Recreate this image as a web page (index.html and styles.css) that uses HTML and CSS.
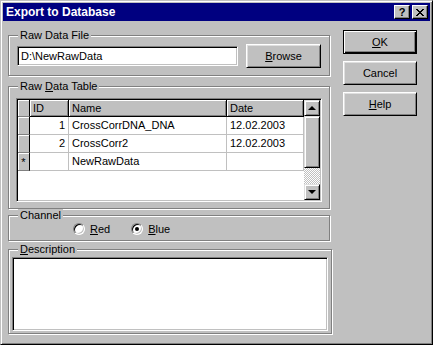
FILE: index.html
```html
<!DOCTYPE html>
<html lang="en">
    <head>
        <meta charset="utf-8" />
        <title>Export to Database</title>
        <link rel="stylesheet" href="styles.css">
    </head>
    <body>
        <div class="window">
            <div class="titlebar">
                <span class="title">Export to Database</span>
                <div class="caption-btns">
                    <span class="cap-btn help">?</span>
                    <span class="cap-btn close">
                        <svg width="8" height="7" viewBox="0 0 8 7" shape-rendering="crispEdges">
                            <path d="M0 0h2v1h1v1h2v-1h1v-1h2v1h-1v1h-1v1h-1v1h1v1h1v1h1v1h-2v-1h-1v-1h-2v1h-1v1h-2v-1h1v-1h1v-1h1v-1h-1v-1h-1v-1h-1z" fill="#000"/>
                        </svg>
                    </span>
                </div>
            </div>
            <div class="client">
                <div class="left">
                    <fieldset class="group group-file">
                        <legend>Raw Data File</legend>
                        <div class="file-row">
                            <div class="field">D:\NewRawData</div>
                            <button class="btn browse"><u>B</u>rowse</button>
                        </div>
                    </fieldset>

                    <fieldset class="group group-table">
                        <legend>Raw <u>D</u>ata Table</legend>
                        <div class="grid">
                            <div class="sheet">
                                <div class="row head">
                                    <div class="cell sel"></div>
                                    <div class="cell">ID</div>
                                    <div class="cell">Name</div>
                                    <div class="cell">Date</div>
                                </div>
                                <div class="row">
                                    <div class="cell sel"></div>
                                    <div class="cell num">1</div>
                                    <div class="cell">CrossCorrDNA_DNA</div>
                                    <div class="cell">12.02.2003</div>
                                </div>
                                <div class="row">
                                    <div class="cell sel"></div>
                                    <div class="cell num">2</div>
                                    <div class="cell">CrossCorr2</div>
                                    <div class="cell">12.02.2003</div>
                                </div>
                                <div class="row">
                                    <div class="cell sel star">*</div>
                                    <div class="cell num"></div>
                                    <div class="cell">NewRawData</div>
                                    <div class="cell"></div>
                                </div>
                            </div>
                            <div class="scrollbar">
                                <div class="sb-btn"><span class="arrow up"></span></div>
                                <div class="sb-thumb"></div>
                                <div class="sb-track"></div>
                                <div class="sb-btn"><span class="arrow down"></span></div>
                            </div>
                        </div>
                    </fieldset>

                    <fieldset class="group group-channel">
                        <legend>Channel</legend>
                        <div class="radios">
                            <label class="radio-item"><span class="radio"></span><span><u>R</u>ed</span></label>
                            <label class="radio-item"><span class="radio checked"></span><span><u>B</u>lue</span></label>
                        </div>
                    </fieldset>

                    <fieldset class="group group-desc">
                        <legend><u>D</u>escription</legend>
                        <div class="memo"></div>
                    </fieldset>
                </div>

                <div class="actions">
                    <button class="btn default"><u>O</u>K</button>
                    <button class="btn">Cancel</button>
                    <button class="btn"><u>H</u>elp</button>
                </div>
            </div>
        </div>
    </body>
</html>
```

FILE: styles.css
```css
:root {
    --face: #c0c0c0;
    --shadow: #808080;
    --light: #dfdfdf;
    --title: #000080;
}

* {
    margin: 0;
    padding: 0;
    box-sizing: border-box;
}

body {
    background: var(--face);
    font-family: "Liberation Sans", Arial, sans-serif;
    font-size: 11px;
    color: #000;
}

u {
    text-underline-offset: 1px;
}

.window {
    width: 433px;
    height: 345px;
    background: var(--face);
    border: 1px solid;
    border-color: var(--face) #000 #000 var(--face);
    box-shadow: inset 1px 1px #fff, inset -1px -1px var(--shadow);
    padding: 2px;
    display: flex;
    flex-direction: column;
}

.titlebar {
    height: 18px;
    background: var(--title);
    display: flex;
    align-items: center;
    justify-content: space-between;
    padding: 0 2px 0 3px;
}

.title {
    color: #fff;
    font-weight: bold;
    font-size: 12px;
    line-height: 18px;
}

.caption-btns {
    display: flex;
    gap: 2px;
}

.cap-btn {
    width: 16px;
    height: 14px;
    background: var(--face);
    border: 1px solid;
    border-color: #fff #000 #000 #fff;
    box-shadow: inset -1px -1px var(--shadow);
    display: flex;
    align-items: center;
    justify-content: center;
    font-weight: bold;
    font-size: 11px;
    line-height: 12px;
}

.client {
    flex: 1;
    display: flex;
    padding: 8px 0 0 5px;
    gap: 11px;
}

.left {
    width: 324px;
    display: flex;
    flex-direction: column;
}

/* all groups: no side padding, so the legend sits 12px in */
.group {
    width: 322px;
    border: 1px solid var(--shadow);
    box-shadow: inset 1px 1px #fff, 1px 1px #fff;
    min-width: 0;
    padding: 0;
}

.group legend {
    margin-left: 9px;
    padding: 0 2px;
    line-height: 13px;
    background: var(--face);
}

/* raw data file */
.group-file {
    padding-top: 2px;
    padding-bottom: 7px;
}

.file-row {
    display: flex;
    align-items: center;
    gap: 8px;
    height: 24px;
    margin-left: 8px;
}

.field {
    width: 221px;
    height: 20px;
    background: #fff;
    border: 1px solid;
    border-color: var(--shadow) #fff #fff var(--shadow);
    box-shadow: inset 1px 1px #000, inset -1px -1px var(--face);
    padding: 0 3px;
    line-height: 18px;
}

.btn {
    width: 75px;
    height: 24px;
    background: var(--face);
    font-family: inherit;
    font-size: 11px;
    color: #000;
    border: 1px solid;
    border-color: #fff #000 #000 #fff;
    box-shadow: inset 1px 1px var(--light), inset -1px -1px var(--shadow);
}

/* raw data table */
.group-table {
    margin-top: 4px;
    padding-top: 5px;
    padding-bottom: 6px;
}

.grid {
    width: 306px;
    height: 104px;
    margin-left: 7px;
    display: flex;
    background: #fff;
    border: 1px solid;
    border-color: var(--shadow) #fff #fff var(--shadow);
    box-shadow: inset 1px 1px #000, inset -1px -1px var(--face);
    padding: 1px;
}

.sheet {
    flex: 1;
}

.row {
    display: grid;
    grid-template-columns: 12px 39px 158px 77px;
    height: 18px;
}

.cell {
    border-right: 1px solid var(--face);
    border-bottom: 1px solid var(--face);
    padding: 0 3px;
    line-height: 17px;
    white-space: nowrap;
    overflow: hidden;
}

.head {
    height: 17px;
}

.head .cell {
    background: var(--face);
    border-right-color: #000;
    border-bottom-color: #000;
    box-shadow: inset 1px 1px #fff, inset -1px -1px var(--shadow);
    line-height: 16px;
}

.cell.num {
    text-align: right;
}

.cell.sel {
    background: var(--face);
    border-right-color: #000;
    border-bottom-color: var(--shadow);
    box-shadow: inset 1px 1px #fff;
    padding: 0;
}

.cell.star {
    text-align: center;
    font-size: 11px;
    line-height: 19px;
}

.scrollbar {
    width: 16px;
    display: flex;
    flex-direction: column;
}

.sb-btn,
.sb-thumb {
    background: var(--face);
    border: 1px solid;
    border-color: var(--light) #000 #000 var(--light);
    box-shadow: inset 1px 1px #fff, inset -1px -1px var(--shadow);
}

.sb-btn {
    height: 16px;
    display: flex;
    align-items: center;
    justify-content: center;
}

.sb-thumb {
    height: 52px;
}

.sb-track {
    flex: 1;
    background: repeating-conic-gradient(var(--face) 0 25%, #fff 0 50%) 0 0 / 2px 2px;
}

.arrow {
    width: 0;
    height: 0;
    border-left: 4px solid transparent;
    border-right: 4px solid transparent;
}

.arrow.up {
    border-bottom: 4px solid #000;
}

.arrow.down {
    border-top: 4px solid #000;
}

/* channel */
.group-channel {
    padding-bottom: 5px;
}

.radios {
    display: flex;
    gap: 21px;
    height: 13px;
    align-items: center;
    margin-left: 64px;
}

.radio-item {
    display: flex;
    align-items: center;
    gap: 5px;
}

.radio {
    width: 12px;
    height: 12px;
    border-radius: 50%;
    background: #fff;
    border: 1px solid;
    border-color: var(--shadow) #fff #fff var(--shadow);
    box-shadow: inset 1px 1px #000, inset -1px -1px var(--face);
    display: flex;
    align-items: center;
    justify-content: center;
}

.radio.checked::after {
    content: '';
    width: 4px;
    height: 4px;
    border-radius: 50%;
    background: #000;
}

/* description */
.group-desc {
    width: 324px;
    margin-top: 2px;
    padding-top: 1px;
    padding-bottom: 2px;
}

.memo {
    width: 316px;
    height: 74px;
    margin-left: 3px;
    background: #fff;
    border: 1px solid;
    border-color: var(--shadow) #fff #fff var(--shadow);
    box-shadow: inset 1px 1px #000, inset -1px -1px var(--face);
}

/* dialog buttons */
.actions {
    display: flex;
    flex-direction: column;
    gap: 7px;
    padding-top: 1px;
}

.actions .btn {
    width: 74px;
}

.btn.default {
    border-color: #000;
    box-shadow: inset 1px 1px #fff, inset -1px -1px #000, inset -2px -2px var(--shadow);
}
```
